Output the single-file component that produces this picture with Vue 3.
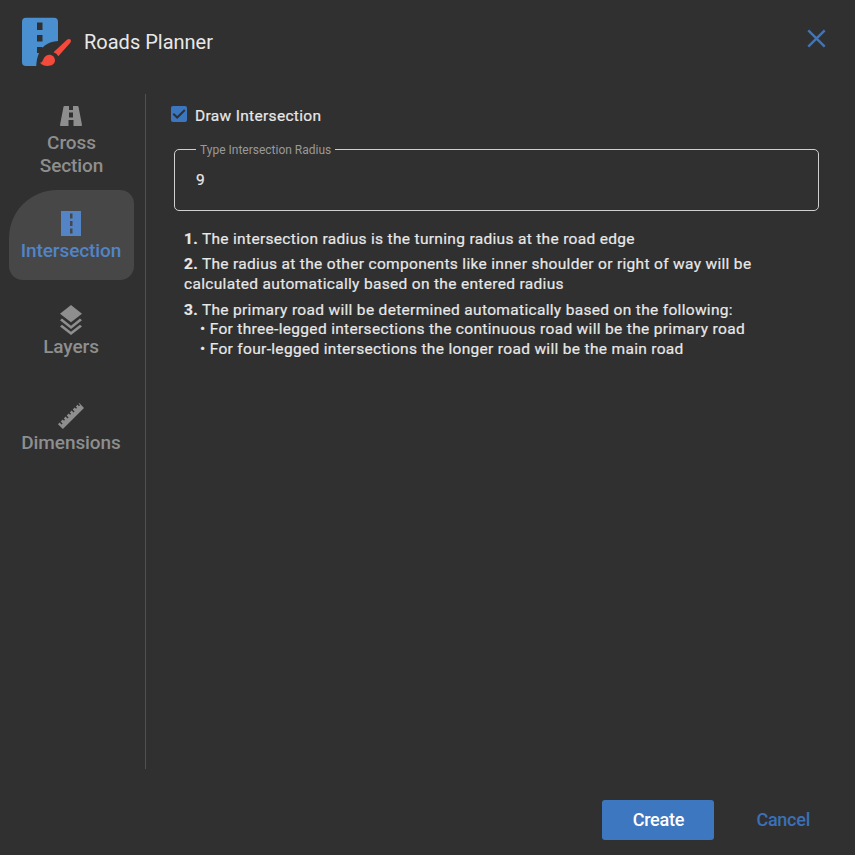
<script setup>
import { ref } from 'vue'

const draw = ref(true)
const radius = ref('9')
const active = ref('Intersection')
const tabs = [
  { name: 'Cross Section', icon: 'road' },
  { name: 'Intersection', icon: 'lane' },
  { name: 'Layers', icon: 'layers' },
  { name: 'Dimensions', icon: 'ruler' },
]
</script>

<template>
  <div class="dialog">
    <header class="header">
      <svg class="logo" viewBox="0 0 50 50">
        <rect x="0" y=".7" width="36" height="48.3" rx="4" fill="#4a8fd0" />
        <path d="M15 5.500h5.500v7.500H15zM15 18h5.500v6.500H15zM15 30h5.500v6H15z" fill="#303030" />
        <path d="M37 24C29 24 21 28 18 34C15.500 39 14.500 43 14.200 50H37Z" fill="#303030" />
        <path d="M31.500 35.300L45 22.700Q47 21.200 48.500 22.500Q49.700 23.800 48.300 25.700L36.300 39.300Q35 36.500 31.500 35.300Z" fill="#f44a3b" />
        <path d="M24.500 38.500C28.500 36.300 33 39.300 33 43.300C33 47 29.500 49 25.500 49C22.500 49 20 48 18 45.700C21.500 45.700 20.500 40.700 24.500 38.500Z" fill="#f44a3b" />
      </svg>
      <h1>Roads Planner</h1>
      <button class="close" aria-label="Close">
        <svg viewBox="0 0 18 18"><path d="M1.200 1.200l15.600 15.600M16.800 1.200L1.200 16.800" /></svg>
      </button>
    </header>

    <div class="body">
      <nav class="tabs">
        <button
          v-for="t in tabs"
          :key="t.name"
          class="tab"
          :class="[t.icon, { active: active === t.name }]"
          @click="active = t.name"
        >
          <svg v-if="t.icon === 'road'" width="22" height="20" viewBox="0 0 22 20">
            <path fill-rule="evenodd" d="M4.500 0H9v4h4V0h4.500q.8 0 1 .8L22 19q.1 1-.8 1H13.500v-6h-5v6H.8q-.9 0-.8-1L3.500.8q.2-.8 1-.8zM9 6.500v5h4v-5z" />
          </svg>
          <svg v-else-if="t.icon === 'lane'" width="20" height="25" viewBox="0 0 20 25">
            <path fill-rule="evenodd" d="M0 0h20v25H0zM9 2.500v5h2.500v-5zM9 10v5h2.500v-5zM9 17.500v5h2.500v-5z" />
          </svg>
          <svg v-else-if="t.icon === 'layers'" width="22" height="30" viewBox="0 0 22 30">
            <path d="M11 0l11 8.700-11 8.600L0 8.700z" />
            <path d="M0 15.300l2-1.700L11 20.700l9-7.100 2 1.700-11 8.600zM0 21.400l2-1.700L11 26.800l9-7.100 2 1.700L11 30z" />
          </svg>
          <svg v-else width="26" height="26" viewBox="0 0 26 26">
            <path d="M0 21.200L1.600 19.600 3.500 21.500 4.600 20.400 2.700 18.500 4.700 16.500 6 17.800 7.100 16.700 5.800 15.400 7.600 13.600 9.500 15.500 10.600 14.400 8.700 12.500 10.700 10.500 12 11.800 13.100 10.700 11.800 9.400 13.600 7.600 15.500 9.500 16.600 8.400 14.700 6.500 16.700 4.500 18 5.800 19.100 4.700 17.800 3.400 19.500 1.700 21 3.200 22.100 2.100 20.700.7 21.300 0 26 4.900 4.900 26z" />
          </svg>
          <span>{{ t.name }}</span>
        </button>
      </nav>

      <main class="content">
        <label class="check">
          <input v-model="draw" type="checkbox" />
          <span class="box"><svg v-if="draw" viewBox="0 0 16 16"><path d="M2.300 7.800L6.200 11.500 13.800 4" /></svg></span>
          <span class="check-text">Draw Intersection</span>
        </label>
        <fieldset class="field">
          <legend>Type Intersection Radius</legend>
          <input v-model="radius" type="text" aria-label="Type Intersection Radius" />
        </fieldset>
        <div class="notes">
          <p><b>1.</b> The intersection radius is the turning radius at the road edge</p>
          <p><b>2.</b> The radius at the other components like inner shoulder or right of way will be<br />calculated automatically based on the entered radius</p>
          <div class="last">
            <b>3.</b> The primary road will be determined automatically based on the following:
            <div class="bullet">• For three-legged intersections the continuous road will be the primary road</div>
            <div class="bullet">• For four-legged intersections the longer road will be the main road</div>
          </div>
        </div>
      </main>
    </div>

    <footer class="footer">
      <button class="create">Create</button>
      <button class="cancel">Cancel</button>
    </footer>
  </div>
</template>

<style>
body { margin: 0; background: #303030; }
</style>

<style scoped>
* { box-sizing: border-box; }
button { border: 0; padding: 0; background: none; font-family: inherit; cursor: pointer; }
.dialog { width: 855px; height: 855px; background: #303030; color: #e8e8e8; font-family: Roboto, "Liberation Sans", sans-serif; display: flex; flex-direction: column; overflow: hidden; }
.header { height: 94px; padding: 17px 29px 0 22px; display: flex; align-items: flex-start; flex: none; }
.logo { width: 50px; height: 50px; display: block; }
h1 { margin: 13px 0 0 12px; font-size: 20px; line-height: 24px; font-weight: 400; }
.close { margin: 12px 0 0 auto; width: 19px; height: 19px; }
.close svg { display: block; width: 19px; height: 19px; fill: none; stroke: #3b76bf; stroke-width: 2.3; }
.body { height: 675px; display: flex; flex: none; }
.tabs { width: 146px; padding: 0 12px 0 9px; border-right: 1px solid #505050; display: flex; flex-direction: column; gap: 6px; }
.tab { width: 125px; height: 90px; flex: none; border-radius: 14px; color: #8e8e8e; font-size: 19px; line-height: 23px; letter-spacing: -.08px; font-weight: 500; display: flex; flex-direction: column; align-items: center; padding: 20px 1px 0 0; }
.tab svg { fill: currentColor; display: block; flex: none; }
.tab.road { padding: 12px 20px 0; }
.tab.road svg { margin-right: 1px; }
.tab.road span { margin-top: 5px; }
.tab.lane { padding-top: 21px; }
.tab.lane span { margin-top: 3px; }
.tab.layers { padding-top: 19px; }
.tab.ruler { padding-top: 21px; }
.tab.ruler span { margin-top: 2px; }
.tab.active { background: #474747; color: #5284c6; border-radius: 48px 14px 14px 14px; }
.content { flex: 1; padding: 11px 36px 0 25px; }
.check { display: flex; align-items: center; height: 20px; }
.check input { appearance: none; margin: 0; width: 0; height: 0; }
.box { width: 16px; height: 16px; border-radius: 2px; background: #3b76bf; margin-bottom: 2px; }
.box svg { display: block; fill: none; stroke: #303030; stroke-width: 2; }
.check-text { margin: 1px 0 0 8px; }
.check-text, .notes { font-size: 15.500px; line-height: 20px; letter-spacing: .32px; -webkit-text-stroke: .2px currentColor; }
.field { margin: 17px 0 0 3px; padding: 0 21px; border: 1px solid #cfcfcf; border-radius: 5px; height: 69px; width: 645px; min-width: 0; }
.field legend { font-size: 12px; line-height: 13px; padding: 2px 4px 0; color: #999; }
.field input { display: block; width: 100%; height: 24px; margin-top: 11px; padding: 0; border: 0; outline: 0; background: transparent; color: #e8e8e8; font: 15.500px/24px Roboto, sans-serif; -webkit-text-stroke: .2px currentColor; }
.notes { margin: 18px 0 0 13px; white-space: nowrap; }
.notes p { margin: 0 0 5px; }
.last { padding-top: 1px; }
.bullet { padding-left: 16px; line-height: 20px; }
.bullet:first-of-type { margin-top: -1px; }
.footer { flex: 1; padding: 31px 45px 0 0; display: flex; justify-content: flex-end; }
.footer button { height: 40px; font-size: 18px; letter-spacing: -.25px; font-weight: 500; padding-bottom: 1px; }
.footer .create { width: 112px; border-radius: 3px; background: #3d77bf; color: #fff; margin-right: 42px; }
.footer .cancel { color: #3b70b8; }
</style>
